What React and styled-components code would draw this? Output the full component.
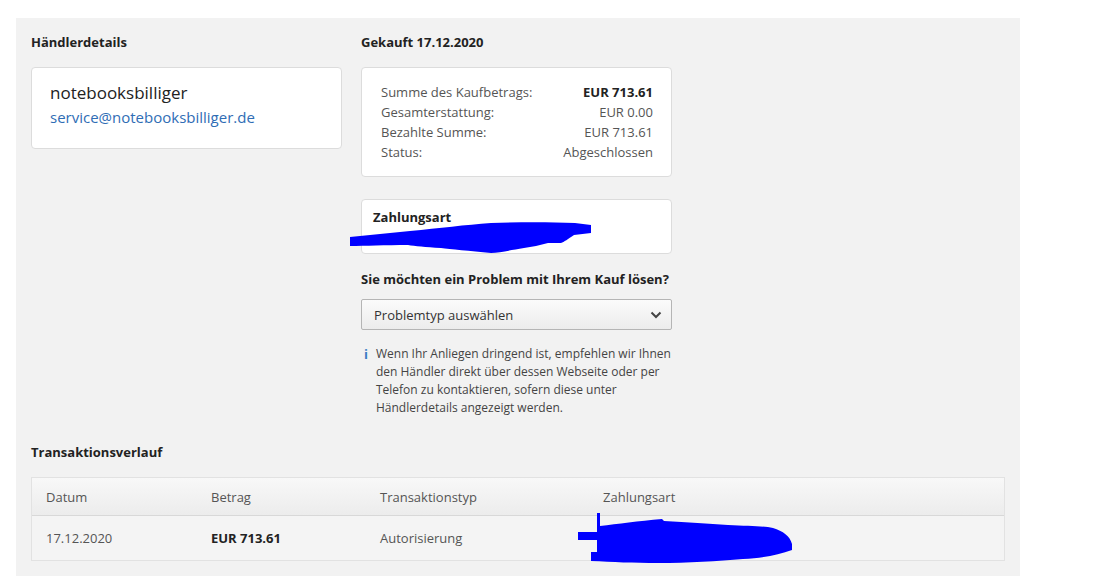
import styled, { createGlobalStyle } from 'styled-components';

const GlobalStyle = createGlobalStyle`
  body {
    margin: 0;
    background: #fff;
    font-family: 'Open Sans', 'Noto Sans', sans-serif;
    color: #333;
  }
`;

const rows = [
  { label: 'Summe des Kaufbetrags:', value: 'EUR 713.61', strong: true },
  { label: 'Gesamterstattung:', value: 'EUR 0.00' },
  { label: 'Bezahlte Summe:', value: 'EUR 713.61' },
  { label: 'Status:', value: 'Abgeschlossen' },
];

export default function App() {
  return (
    <>
      <GlobalStyle />
      <Page>
        <Panel>
          <Columns>
            <Column>
              <Heading>Händlerdetails</Heading>
              <MerchantCard>
                <MerchantName>notebooksbilliger</MerchantName>
                <MerchantMail href="#">service@notebooksbilliger.de</MerchantMail>
              </MerchantCard>
            </Column>
            <Column>
              <Heading>Gekauft 17.12.2020</Heading>
              <SummaryCard>
                {rows.map((r) => (
                  <SummaryRow key={r.label}>
                    <span>{r.label}</span>
                    <Value $strong={r.strong}>{r.value}</Value>
                  </SummaryRow>
                ))}
              </SummaryCard>
              <PaymentCard>
                <PaymentTitle>Zahlungsart</PaymentTitle>
                <Scribble width="242" height="33" viewBox="0 0 242 33" style={{ left: -12, top: 22 }}>
                  <path d="M0 15 C20 13 40 11 60 9 C90 6 115 3 141 1 C170 0 200 0 225 1 L241 3 L241 11 L224 13 C218 17 214 20 211 21 L198 21 C190 23 182 25 174 26 C160 28 150 31 141 31 C120 29 100 27 91 26 C75 25 65 24 58 23 C35 23 15 24 0 24 Z" fill="#0000ff" />
                </Scribble>
              </PaymentCard>
              <Question>Sie möchten ein Problem mit Ihrem Kauf lösen?</Question>
              <Select>
                <span>Problemtyp auswählen</span>
                <svg width="12" height="8" viewBox="0 0 12 8">
                  <path d="M1.5 1.5 L6 6 L10.5 1.5" fill="none" stroke="#444" strokeWidth="2" />
                </svg>
              </Select>
              <Info>
                <InfoIcon>i</InfoIcon>
                <InfoText>
                  Wenn Ihr Anliegen dringend ist, empfehlen wir Ihnen den Händler direkt über dessen Webseite oder per Telefon zu kontaktieren, sofern diese unter Händlerdetails angezeigt werden.
                </InfoText>
              </Info>
            </Column>
          </Columns>

          <HistoryHeading>Transaktionsverlauf</HistoryHeading>
          <Table>
            <HeadRow>
              <Cell>Datum</Cell>
              <Cell>Betrag</Cell>
              <Cell>Transaktionstyp</Cell>
              <Cell>Zahlungsart</Cell>
            </HeadRow>
            <BodyRow>
              <Cell>17.12.2020</Cell>
              <Cell $strong>EUR 713.61</Cell>
              <Cell>Autorisierung</Cell>
              <Cell />
            </BodyRow>
            <Scribble width="216" height="52" viewBox="0 0 216 52" style={{ left: 546, top: 35 }}>
              <path d="M19 0 L22 0 L22 13 C40 11 60 8 84 6 L86 8 C110 9 130 11 150 12 C170 13 185 13 195 15 C205 18 212 23 214 31 L214 37 C200 42 185 45 165 46 C140 48 110 50 80 50 C55 50 35 49 13 48 L13 39 L19 39 L19 27 L0 27 L0 19 L19 19 Z" fill="#0000ff" />
            </Scribble>
          </Table>
        </Panel>
      </Page>
    </>
  );
}

const Page = styled.div`
  padding: 18px 0 0 16px;
`;

const Panel = styled.div`
  width: 1004px;
  box-sizing: border-box;
  background: #f2f2f2;
  padding: 15px 15px 15px 15px;
`;

const Columns = styled.div`
  display: grid;
  grid-template-columns: 311px 311px;
  column-gap: 19px;
`;

const Column = styled.div`
  display: flex;
  flex-direction: column;
`;

const Heading = styled.h3`
  margin: 0;
  font-size: 13px;
  font-weight: 700;
  line-height: 18px;
  color: #222;
`;

const HistoryHeading = styled(Heading)`
  margin-top: 26px;
`;

const Card = styled.div`
  position: relative;
  background: #fff;
  border: 1px solid #dcdcdc;
  border-radius: 4px;
  box-sizing: border-box;
`;

const MerchantCard = styled(Card)`
  margin-top: 16px;
  height: 82px;
  padding: 12px 18px;
`;

const MerchantName = styled.div`
  font-size: 17px;
  line-height: 25px;
  color: #222;
`;

const MerchantMail = styled.a`
  display: block;
  font-size: 15px;
  line-height: 24px;
  color: #2f6db5;
  text-decoration: none;
`;

const SummaryCard = styled(Card)`
  margin-top: 16px;
  height: 110px;
  padding: 14px 18px 0 19px;
`;

const SummaryRow = styled.div`
  display: flex;
  justify-content: space-between;
  font-size: 13px;
  line-height: 20px;
  color: #555;
`;

const Value = styled.span`
  font-weight: ${(p) => (p.$strong ? 700 : 400)};
  color: ${(p) => (p.$strong ? '#222' : '#555')};
`;

const PaymentCard = styled(Card)`
  margin-top: 22px;
  height: 55px;
  padding: 8px 11px;
`;

const PaymentTitle = styled.div`
  font-size: 13px;
  font-weight: 700;
  line-height: 18px;
  color: #222;
`;

const Scribble = styled.svg`
  position: absolute;
  pointer-events: none;
`;

const Question = styled(Heading)`
  margin-top: 16px;
`;

const Select = styled.div`
  margin-top: 11px;
  height: 31px;
  box-sizing: border-box;
  border: 1px solid #b5b5b5;
  border-radius: 2px;
  background: linear-gradient(#fbfbfb, #ececec);
  display: flex;
  align-items: center;
  justify-content: space-between;
  padding: 0 9px 0 12px;
  font-size: 13px;
  color: #333;
`;

const Info = styled.div`
  margin-top: 15px;
  display: flex;
  gap: 8px;
  padding-left: 3px;
`;

const InfoIcon = styled.span`
  color: #3b7dc4;
  font-weight: 700;
  font-size: 13px;
  line-height: 18px;
`;

const InfoText = styled.p`
  margin: 0;
  width: 300px;
  font-size: 12px;
  line-height: 18px;
  color: #444;
`;

const Table = styled.div`
  position: relative;
  margin-top: 16px;
  width: 974px;
  border: 1px solid #e2e2e2;
  box-sizing: border-box;
`;

const Row = styled.div`
  display: grid;
  grid-template-columns: 165px 169px 223px 1fr;
  align-items: center;
  padding-left: 14px;
`;

const HeadRow = styled(Row)`
  height: 37px;
  background: linear-gradient(#f8f8f8, #ececec);
  border-bottom: 1px solid #d8d8d8;
`;

const BodyRow = styled(Row)`
  height: 44px;
  background: #f4f4f4;
`;

const Cell = styled.div`
  font-size: 13px;
  font-weight: ${(p) => (p.$strong ? 700 : 400)};
  color: ${(p) => (p.$strong ? '#222' : '#555')};
`;
